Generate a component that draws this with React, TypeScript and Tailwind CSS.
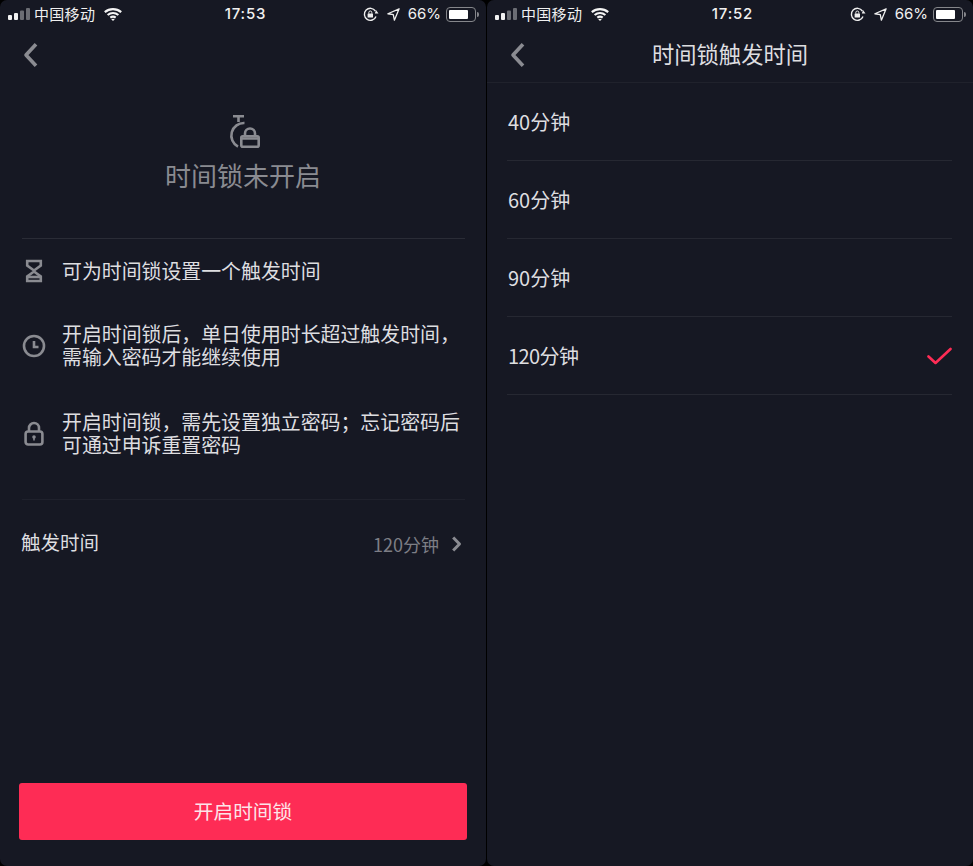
import React from 'react';

const Signal = () => (
  <svg width="22" height="12" viewBox="0 0 22 12" className="shrink-0">
    <rect x="0" y="7" width="4" height="5" rx="1" fill="#f2f2f2" />
    <rect x="6" y="5" width="4" height="7" rx="1" fill="#f2f2f2" />
    <rect x="12" y="2.5" width="4" height="9.5" rx="1" fill="#6b6d74" />
    <rect x="18" y="0" width="4" height="12" rx="1" fill="#6b6d74" />
  </svg>
);

const Wifi = () => (
  <svg width="18" height="13" viewBox="0 0 18 13" fill="none" stroke="#f4f4f4" strokeWidth="2.2" className="shrink-0">
    <path d="M0.8 4.2C5.5 0.2 12.5 0.2 17.2 4.2" />
    <path d="M3.6 7C6.8 4.4 11.2 4.4 14.4 7" />
    <path d="M6.3 9.7C7.9 8.5 10.1 8.5 11.7 9.7" />
    <path d="M9 13L7.2 11.2C8.2 10.5 9.8 10.5 10.8 11.2Z" fill="#f4f4f4" stroke="none" />
  </svg>
);

const RotationLock = () => (
  <svg width="16" height="15" viewBox="0 0 16 15" fill="none" className="shrink-0">
    <path d="M13 9.5A6 6 0 1 1 12.4 4" stroke="#eee" strokeWidth="1.4" />
    <path d="M15.5 6.4L11.8 6.4L13 3Z" fill="#eee" />
    <rect x="4.6" y="6.6" width="5.4" height="4" rx="0.5" fill="#eee" />
    <path d="M5.8 6.6V5.5A1.5 1.5 0 0 1 8.8 5.5V6.6" stroke="#eee" strokeWidth="1" />
  </svg>
);

const Location = () => (
  <svg width="13" height="13" viewBox="0 0 12 12" fill="none" className="shrink-0">
    <path d="M11.2 0.8L0.8 5.3L5.8 6.2L6.8 11.2Z" stroke="#eee" strokeWidth="1.2" strokeLinejoin="round" />
  </svg>
);

const Battery = () => (
  <div className="flex items-center shrink-0">
    <div className="w-[30px] h-[15px] rounded-[4px] border border-[#85868b] p-[2px]">
      <div className="w-[19px] h-full bg-white rounded-[1px]" />
    </div>
    <div className="w-[2px] h-[5px] ml-[1px] bg-[#85868b] rounded-r-sm" />
  </div>
);

const StatusBar = ({ time }: { time: string }) => (
  <div className="relative flex h-[28px] items-center justify-between pl-[8px] pr-[7px] text-[#f0f0f0]">
    <div className="flex items-center">
      <Signal />
      <span className="ml-[4px] text-[15px] tracking-[0.3px]">中国移动</span>
      <span className="ml-[9px]"><Wifi /></span>
    </div>
    <span className="absolute left-0 right-0 pl-[5px] text-center font-['Inter'] text-[15px] font-medium tracking-[0.8px]">{time}</span>
    <div className="flex items-center">
      <RotationLock />
      <span className="ml-[8px]"><Location /></span>
      <span className="ml-[8px] mr-[5px] font-['Inter'] text-[15px]">66%</span>
      <Battery />
    </div>
  </div>
);

const Back = () => (
  <svg width="16" height="26" viewBox="0 0 16 26" fill="none" stroke="#8a8b91" strokeWidth="3.6" strokeLinejoin="round">
    <path d="M14 2.2L4 13L14 23.8" />
  </svg>
);

const StopwatchLock = () => (
  <svg width="36" height="36" viewBox="0 0 36 36" fill="none" stroke="#8a8b91" strokeWidth="2.6">
    <path d="M8 3.3H19M13.5 3.3V9" />
    <path d="M13 33.7A12.6 12.6 0 0 1 19.5 10" />
    <rect x="16.3" y="23.3" width="17.4" height="10.4" rx="1.5" />
    <path d="M16.3 25.5H33.7" />
    <path d="M20 23V20.5A5 5 0 0 1 30 20.5V23" />
  </svg>
);

const Hourglass = () => (
  <svg width="22" height="24" viewBox="0 0 22 24" fill="none" stroke="#8a8b91" strokeWidth="2.6">
    <path d="M4.2 2H17.8V6.5L11 11.5L4.2 6.5ZM11 12.5L17.8 17.5V22H4.2V17.5Z" />
    <path d="M5 18H17" />
  </svg>
);

const Clock = () => (
  <svg width="24" height="24" viewBox="0 0 24 24" fill="none" stroke="#8a8b91" strokeWidth="2.6">
    <circle cx="12" cy="12" r="10" />
    <path d="M12 7V13H16.5" />
  </svg>
);

const Padlock = () => (
  <svg width="22" height="26" viewBox="0 0 22 26" fill="none" stroke="#8a8b91" strokeWidth="2.6">
    <rect x="2.6" y="10.5" width="16.8" height="13" rx="2.5" />
    <path d="M6 10.5V7A5 5 0 0 1 16 7V10.5" />
    <circle cx="11" cy="16" r="1.8" fill="#8a8b91" stroke="none" />
    <path d="M11 16V19.5" strokeWidth="1.6" />
  </svg>
);

const Chevron = () => (
  <svg width="11" height="16" viewBox="0 0 11 16" fill="none" stroke="#8a8b91" strokeWidth="3" strokeLinejoin="round">
    <path d="M2.2 1.5L8.5 8L2.2 14.5" />
  </svg>
);

const Check = () => (
  <svg width="26" height="20" viewBox="0 0 26 20" fill="none" stroke="#fe2c55" strokeWidth="2.6" strokeLinecap="round" strokeLinejoin="round">
    <path d="M2.5 10.5L9.5 17L24.5 3" />
  </svg>
);

const rules = [
  { icon: <Hourglass />, text: '可为时间锁设置一个触发时间', cls: 'mt-[19px] h-[26px]' },
  { icon: <Clock />, text: '开启时间锁后，单日使用时长超过触发时间，\n需输入密码才能继续使用', cls: 'mt-[38px] h-[48px]' },
  { icon: <Padlock />, text: '开启时间锁，需先设置独立密码；忘记密码后\n可通过申诉重置密码', cls: 'mt-[40px] h-[48px]' },
];

const options = ['40分钟', '60分钟', '90分钟', '120分钟'];

export default function App() {
  return (
    <div
      className="flex h-[866px] w-[973px] justify-between bg-black"
      style={{ fontFamily: '"Noto Sans CJK SC", "Liberation Sans", sans-serif' }}
    >
      {/* left phone */}
      <div className="flex w-[486px] flex-col overflow-hidden rounded-[7px] bg-[#161823]">
        <StatusBar time="17:53" />
        <div className="flex h-[54px] items-center pl-[22px]">
          <Back />
        </div>
        <div className="flex flex-col items-center">
          <div className="mt-[31px] h-[36px]"><StopwatchLock /></div>
          <p className="mt-[7px] text-[26px] leading-[38px] text-[#8a8b91]">时间锁未开启</p>
        </div>
        <div className="mx-[22px] mt-[44px] h-px w-[443px] bg-[#2a2c36]" />
        <div className="pl-[22px]">
          {rules.map((r, i) => (
            <div key={i} className={`flex items-center ${r.cls}`}>
              <div className="flex w-[24px] justify-center">{r.icon}</div>
              <p className="ml-[16px] whitespace-pre-line pb-[2px] text-[19.9px] leading-[23px] text-[#dedee0]">{r.text}</p>
            </div>
          ))}
        </div>
        <div className="mx-[22px] mt-[41px] h-px w-[443px] bg-[#1f212c]" />
        <div className="mt-[24px] flex items-center justify-between pl-[21px] pr-[24px]">
          <span className="text-[19.5px] leading-[32px] text-[#dedee0]">触发时间</span>
          <div className="flex items-center pt-[4px] text-[#7d7e85]">
            <span className="text-[18px] leading-[32px]">120分钟</span>
            <span className="ml-[12px]"><Chevron /></span>
          </div>
        </div>
        <div className="flex-1" />
        <button className="mx-[19px] mb-[26px] h-[57px] w-[448px] rounded-[3px] bg-[#fe2c55] pb-[2px] text-[19.7px] text-[#fde4e9]">
          开启时间锁
        </button>
      </div>

      {/* right phone */}
      <div className="flex w-[486px] flex-col overflow-hidden rounded-[7px] bg-[#161823]">
        <StatusBar time="17:52" />
        <div className="relative flex h-[55px] items-center border-b border-[#20222c] pl-[22px]">
          <Back />
          <span className="absolute left-0 right-0 pb-[3px] text-center text-[22.3px] text-[#dedee0]">时间锁触发时间</span>
        </div>
        <div className="pl-[20px] pr-[21px]">
          {options.map((o) => (
            <div key={o} className="flex h-[78px] items-center justify-between border-b border-[#262832]">
              <span className={o === '120分钟' ? 'ml-px text-[20px] tracking-[-0.6px] text-[#dedee0]' : 'ml-px text-[20px] text-[#dedee0]'}>{o}</span>
              {o === '120分钟' && <Check />}
            </div>
          ))}
        </div>
      </div>
    </div>
  );
}
